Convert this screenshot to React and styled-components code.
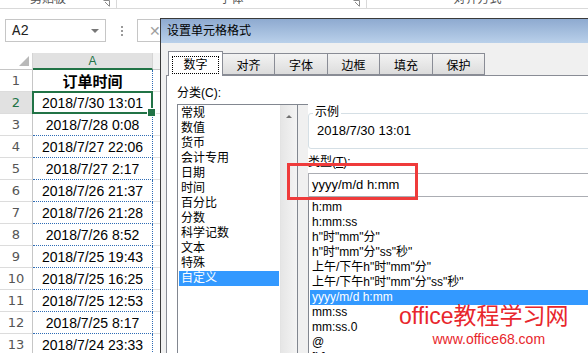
import React from "react";
import styled, { createGlobalStyle, css } from "styled-components";

const FONT = `"Liberation Sans", "Noto Sans CJK SC", sans-serif`;

const GlobalStyle = createGlobalStyle`
  html, body { margin: 0; padding: 0; background: #fff; }
  body { font-family: ${FONT}; overflow: hidden; }
  * { box-sizing: border-box; }
`;

const Page = styled.div`
  position: relative;
  width: 588px;
  height: 353px;
  overflow: hidden;
  background: #fff;
`;

/* ---------- ribbon strip ---------- */
const Ribbon = styled.div`
  display: flex;
  height: 9px;
  border-bottom: 1px solid #d9d9d9;
  overflow: hidden;
`;
const RibbonGroup = styled.div`
  flex: 0 0 ${(p) => p.$w}px;
  display: flex;
  align-items: flex-start;
  border-right: 1px solid #d9d9d9;
`;
const RibbonLabel = styled.div`
  flex: 1;
  text-align: center;
  font-size: 12px;
  line-height: 14px;
  margin-top: -8px;
  color: #555;
`;
const Launcher = styled.div`
  flex: 0 0 20px;
  display: flex;
  justify-content: center;
`;

/* ---------- formula row ---------- */
const FormulaRow = styled.div`
  display: flex;
  height: 23px;
  margin-top: 10px;
  padding-left: 5px;
`;
const NameBox = styled.div`
  flex: 0 0 101px;
  border: 1px solid #c6c6c6;
  display: flex;
  align-items: center;
  justify-content: space-between;
  padding: 0 6px;
  font-family: "Liberation Mono", monospace;
  font-size: 14px;
  color: #222;
`;
const DropArrow = styled.span`
  width: 0;
  height: 0;
  border-left: 4px solid transparent;
  border-right: 4px solid transparent;
  border-top: 4px solid #777;
`;
const Dots = styled.div`
  flex: 0 0 31px;
  display: flex;
  flex-direction: column;
  align-items: center;
  justify-content: center;
  gap: 2px;
  & > span {
    width: 2px;
    height: 2px;
    background: #9a9a9a;
  }
`;
const FormulaBox = styled.div`
  flex: 1;
  border: 1px solid #c6c6c6;
  display: flex;
  align-items: center;
  padding-left: 11px;
  color: #a0a0a0;
  font-size: 14px;
`;

/* ---------- grid ---------- */
const Sheet = styled.div`
  margin-top: 11px;
`;
const GridRow = styled.div`
  display: grid;
  grid-template-columns: 33px 120px 1fr;
  height: ${(p) => p.$h}px;
`;
const Corner = styled.div`
  border-right: 1px solid #d4d4d4;
  border-bottom: 1px solid #c6c6c6;
  background: #fff;
  display: flex;
  align-items: flex-end;
  justify-content: flex-end;
  padding: 0 3px 3px 0;
`;
const ColHead = styled.div`
  background: ${(p) => (p.$sel ? "#e1e1e1" : "#f3f3f3")};
  border-right: 1px solid #d4d4d4;
  border-bottom: ${(p) => (p.$sel ? "2px solid #217346" : "1px solid #c6c6c6")};
  color: ${(p) => (p.$sel ? "#217346" : "#444")};
  font-size: 12px;
  display: flex;
  align-items: center;
  justify-content: center;
`;
const RowHead = styled.div`
  background: ${(p) => (p.$sel ? "#e1e1e1" : "#fff")};
  border-right: 1px solid #c6c6c6;
  border-bottom: 1px solid #dcdcdc;
  color: ${(p) => (p.$sel ? "#217346" : "#555")};
  font-family: "DejaVu Sans", sans-serif;
  font-size: 13px;
  display: flex;
  align-items: center;
  justify-content: center;
`;
const Cell = styled.div`
  position: relative;
  border-right: 1px dotted #2e6cb5;
  border-bottom: 1px dotted #2e6cb5;
  display: flex;
  align-items: center;
  justify-content: center;
  font-size: ${(p) => (p.$head ? 15 : 14)}px;
  font-weight: ${(p) => (p.$head ? 700 : 400)};
  color: #000;
  ${(p) =>
    p.$sel &&
    css`
      &::after {
        content: "";
        position: absolute;
        left: -1px;
        top: -1px;
        right: -1px;
        bottom: -1px;
        border: 2px solid #217346;
      }
      &::before {
        content: "";
        position: absolute;
        right: -4px;
        bottom: -4px;
        width: 7px;
        height: 7px;
        background: #217346;
        border: 1px solid #fff;
        z-index: 2;
      }
    `}
`;
const RestCell = styled.div`
  border-bottom: 1px solid #e1e1e1;
`;

/* ---------- dialog ---------- */
const Dialog = styled.div`
  position: absolute;
  left: 160px;
  top: 18px;
  width: 440px;
  height: 345px;
  background: #f0f0f0;
  border-left: 1px solid #3a3a3a;
  border-top: 1px solid #3a3a3a;
  display: flex;
  flex-direction: column;
`;
const TitleBar = styled.div`
  height: 24px;
  background: linear-gradient(#8eaad0, #b9d0ea);
  padding-left: 6px;
  font-size: 12px;
  line-height: 24px;
  color: #000;
`;
const DialogBody = styled.div`
  flex: 1;
  padding: 8px 0 0 5px;
  display: flex;
  flex-direction: column;
`;
const TabStrip = styled.div`
  display: flex;
  align-items: flex-end;
  height: 24px;
  padding-left: 2px;
  position: relative;
  z-index: 1;
`;
const Tab = styled.div`
  flex: 0 0 ${(p) => p.$w}px;
  height: ${(p) => (p.$active ? 25 : 22)}px;
  margin-bottom: ${(p) => (p.$active ? -1 : 0)}px;
  border: 1px solid #898c95;
  border-bottom: ${(p) => (p.$active ? "none" : "1px solid #898c95")};
  margin-right: -1px;
  background: ${(p) => (p.$active ? "#fff" : "linear-gradient(#f3f3f3, #dcdcdc)")};
  font-size: 12px;
  display: flex;
  align-items: ${(p) => (p.$active ? "flex-start" : "center")};
  justify-content: center;
  padding-top: ${(p) => (p.$active ? 4 : 0)}px;
  color: #000;
`;
const FocusRect = styled.span`
  border: 1px dotted #000;
  padding: 0 10px;
  line-height: 16px;
  height: 18px;
`;
const Panel = styled.div`
  flex: 1;
  background: #fff;
  border-top: 1px solid #898c95;
  border-left: 1px solid #898c95;
  display: grid;
  grid-template-columns: 131px 1fr;
  padding-left: 10px;
`;
const Column = styled.div`
  display: flex;
  flex-direction: column;
`;
const FieldLabel = styled.div`
  font-size: 12px;
  line-height: 15px;
  margin-top: ${(p) => p.$mt}px;
  & u {
    text-decoration: underline;
  }
`;
const CatBox = styled.div`
  margin-top: 3px;
  height: 260px;
  display: flex;
  border-top: 1px solid #828790;
`;
const CatFrame = styled.div`
  flex: 0 0 121px;
  display: flex;
  border-left: 1px solid #828790;
  border-right: 1px solid #828790;
`;
const Gutter = styled.div`
  flex: 1;
  background: #f0f0f0;
`;
const ListBody = styled.div`
  flex: 1;
  padding: ${(p) => p.$pt}px 1px 0 1px;
`;
const Item = styled.div`
  height: 15px;
  line-height: 15px;
  font-size: 12px;
  padding-left: 2px;
  white-space: nowrap;
  color: ${(p) => (p.$sel ? "#fff" : "#000")};
  background: ${(p) => (p.$sel ? "#3399ff" : "transparent")};
`;
const ScrollBar = styled.div`
  flex: 0 0 17px;
  background: linear-gradient(90deg, #e6e6e6, #f4f4f4);
  border-left: 1px solid #e3e3e3;
  display: flex;
  justify-content: center;
  padding-top: 10px;
  & > span {
    width: 0;
    height: 0;
    border-left: 3px solid transparent;
    border-right: 3px solid transparent;
    border-bottom: 3px solid #707070;
  }
`;
const SampleBox = styled.div`
  position: relative;
  margin-top: 37px;
  height: 36px;
  border: 1px solid #d5dfe5;
  border-radius: 3px;
  margin-right: -20px;
  padding-left: 8px;
  font-size: 13px;
  line-height: 34px;
`;
const Legend = styled.span`
  position: absolute;
  left: 4px;
  top: -9px;
  padding: 0 2px;
  background: #fff;
  font-size: 12px;
  line-height: 15px;
`;
const TypeInput = styled.div`
  margin-top: 3px;
  height: 24px;
  border: 1px solid #abadb3;
  margin-right: -20px;
  padding-left: 3px;
  font-size: 13px;
  line-height: 22px;
`;
const TypeList = styled.div`
  border-left: 1px solid #828790;
  flex: 1;
`;

/* ---------- overlays ---------- */
const RedFrame = styled.div`
  position: absolute;
  left: 287px;
  top: 163px;
  width: 131px;
  height: 37px;
  border: 3px solid #ef3b3b;
`;
const Watermark = styled.div`
  position: absolute;
  left: 399px;
  top: 303px;
  display: flex;
  flex-direction: column;
  align-items: center;
  color: #e8262c;
`;
const WmTitle = styled.div`
  font-size: 23px;
  line-height: 27px;
  white-space: nowrap;
`;
const WmUrl = styled.div`
  font-size: 14px;
  line-height: 16px;
  margin-top: 1px;
  padding-left: 10px;
  white-space: nowrap;
`;

const LauncherIcon = () => (
  <svg width="7" height="7" viewBox="0 0 7 7">
    <path d="M0.5 0.5 H6.5 V6.5" fill="none" stroke="#8a8a8a" />
    <path d="M2 2 L6 6" stroke="#8a8a8a" />
  </svg>
);

const rows = [
  ["订单时间", true],
  ["2018/7/30 13:01"],
  ["2018/7/28 0:08"],
  ["2018/7/27 22:06"],
  ["2018/7/27 2:17"],
  ["2018/7/26 21:37"],
  ["2018/7/26 21:28"],
  ["2018/7/26 8:52"],
  ["2018/7/25 19:43"],
  ["2018/7/25 16:25"],
  ["2018/7/25 12:53"],
  ["2018/7/25 8:17"],
  ["2018/7/24 23:33"],
];

const cats = ["常规", "数值", "货币", "会计专用", "日期", "时间", "百分比", "分数", "科学记数", "文本", "特殊", "自定义"];
const types = [
  "h:mm",
  "h:mm:ss",
  'h"时"mm"分"',
  'h"时"mm"分"ss"秒"',
  '上午/下午h"时"mm"分"',
  '上午/下午h"时"mm"分"ss"秒"',
  "yyyy/m/d h:mm",
  "mm:ss",
  "mm:ss.0",
  "@",
  "[h]:mm:ss",
];
const tabs = [
  ["数字", 55],
  ["对齐", 53],
  ["字体", 54],
  ["边框", 53],
  ["填充", 54],
  ["保护", 53],
];

export default function App() {
  return (
    <Page>
      <GlobalStyle />
      <Ribbon>
        <RibbonGroup $w={117}>
          <RibbonLabel>剪贴板</RibbonLabel>
          <Launcher><LauncherIcon /></Launcher>
        </RibbonGroup>
        <RibbonGroup $w={250}>
          <RibbonLabel>字体</RibbonLabel>
          <Launcher><LauncherIcon /></Launcher>
        </RibbonGroup>
        <RibbonGroup $w={242}>
          <RibbonLabel>对齐方式</RibbonLabel>
          <Launcher><LauncherIcon /></Launcher>
        </RibbonGroup>
      </Ribbon>

      <FormulaRow>
        <NameBox>
          A2
          <DropArrow />
        </NameBox>
        <Dots>
          <span />
          <span />
          <span />
        </Dots>
        <FormulaBox>✕</FormulaBox>
      </FormulaRow>

      <Sheet>
        <GridRow $h={17}>
          <Corner>
            <svg width="10" height="10" viewBox="0 0 10 10">
              <path d="M10 0 V10 H0 Z" fill="#b9b9b9" />
            </svg>
          </Corner>
          <ColHead $sel>A</ColHead>
          <ColHead>B</ColHead>
        </GridRow>
        {rows.map(([text, head], i) => (
          <GridRow $h={22} key={i}>
            <RowHead $sel={i === 1}>{i + 1}</RowHead>
            <Cell $head={head} $sel={i === 1}>{text}</Cell>
            <RestCell />
          </GridRow>
        ))}
      </Sheet>

      <Dialog>
        <TitleBar>设置单元格格式</TitleBar>
        <DialogBody>
          <TabStrip>
            {tabs.map(([t, w], i) => (
              <Tab key={t} $w={w} $active={i === 0}>
                {i === 0 ? <FocusRect>{t}</FocusRect> : t}
              </Tab>
            ))}
          </TabStrip>
          <Panel>
            <Column>
              <FieldLabel $mt={10}>分类(C):</FieldLabel>
              <CatBox>
                <CatFrame>
                  <ListBody $pt={1}>
                    {cats.map((c, i) => (
                      <Item key={c} $sel={i === cats.length - 1}>{c}</Item>
                    ))}
                  </ListBody>
                  <ScrollBar>
                    <span />
                  </ScrollBar>
                </CatFrame>
                <Gutter />
              </CatBox>
            </Column>
            <Column>
              <SampleBox>
                <Legend>示例</Legend>
                2018/7/30 13:01
              </SampleBox>
              <FieldLabel $mt={6}>
                类型(<u>T</u>):
              </FieldLabel>
              <TypeInput>yyyy/m/d h:mm</TypeInput>
              <TypeList>
                <ListBody $pt={3}>
                  {types.map((t, i) => (
                    <Item key={t} $sel={i === 6}>{t}</Item>
                  ))}
                </ListBody>
              </TypeList>
            </Column>
          </Panel>
        </DialogBody>
      </Dialog>

      <RedFrame />
      <Watermark>
        <WmTitle>office教程学习网</WmTitle>
        <WmUrl>www.office68.com</WmUrl>
      </Watermark>
    </Page>
  );
}
